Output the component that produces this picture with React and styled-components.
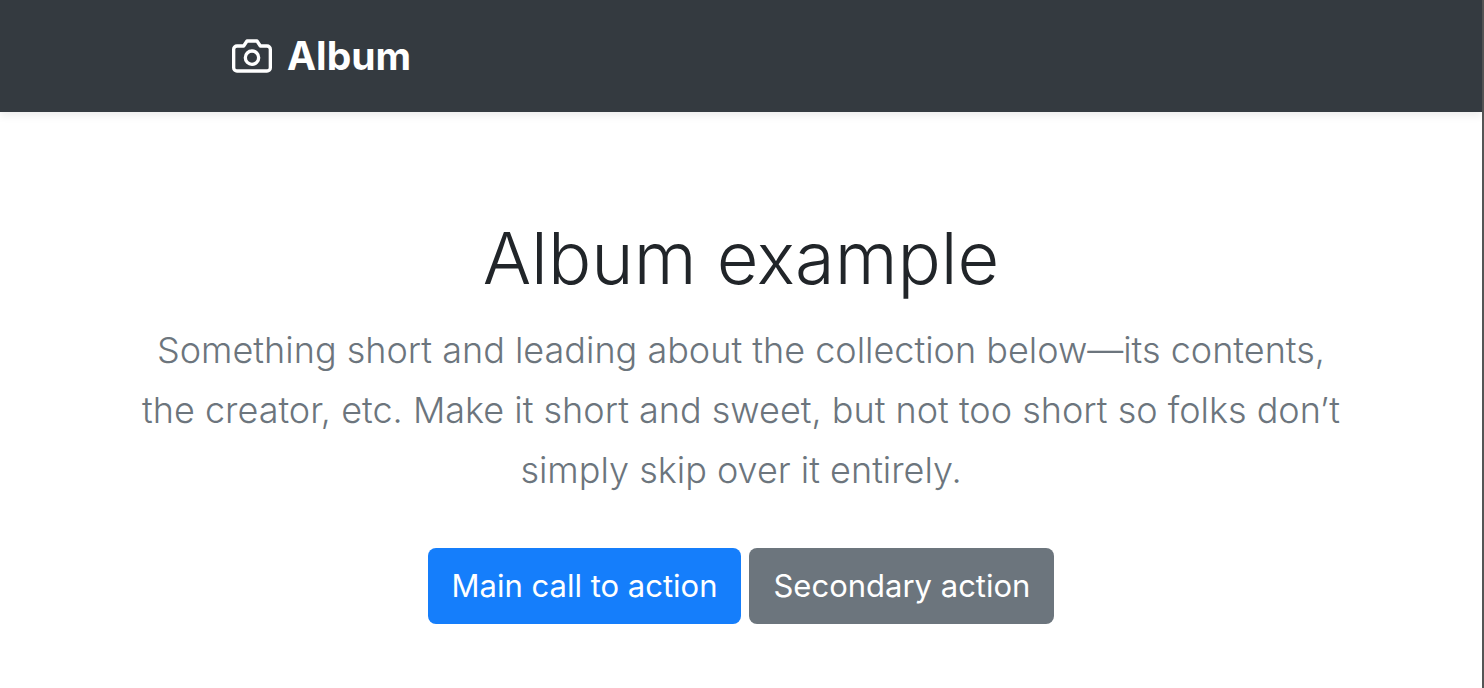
import React from "react";
import styled, { createGlobalStyle } from "styled-components";

const GlobalStyle = createGlobalStyle`
  *, *::before, *::after { box-sizing: border-box; }
  body {
    margin: 0;
    background: #fff;
    color: #212529;
    font-family: Inter, "Liberation Sans", sans-serif;
    font-size: 31px;
    line-height: 48px;
  }
`;

const Page = styled.div`
  min-height: 100vh;
  border-right: 2px solid #555;
`;

const Navbar = styled.header`
  background: #343a40;
  padding: 16px 0;
  box-shadow: 0 4px 8px rgba(0, 0, 0, 0.075);
`;

const NavContainer = styled.div`
  display: flex;
  max-width: 1080px;
  margin: 0 auto;
  padding: 0 31px;
`;

const Brand = styled.a`
  display: flex;
  align-items: center;
  gap: 15px;
  padding: 10px 0;
  color: #fff;
  font-size: 39px;
  font-weight: 700;
  line-height: 60px;
  text-decoration: none;
`;

const Hero = styled.main`
  max-width: 1280px;
  margin: 0 auto;
  padding: 98px 30px 48px;
  text-align: center;
`;

const Title = styled.h1`
  margin: 0 0 14px;
  font-size: 72px;
  font-weight: 300;
  line-height: 96px;
`;

const Lead = styled.p`
  margin: 0 0 48px;
  color: #6c757d;
  font-size: 36px;
  font-weight: 300;
  line-height: 60px;
`;

const Actions = styled.div`
  display: flex;
  flex-wrap: wrap;
  justify-content: center;
  gap: 8px;
`;

const Button = styled.button`
  padding: 14px 24px;
  border: 0;
  border-radius: 8px;
  background: ${({ $primary }) => ($primary ? "#157efb" : "#6c757d")};
  color: #fff;
  font: inherit;
  cursor: pointer;
`;

function CameraIcon() {
  return (
    <svg width="40" height="40" viewBox="0 0 24 24" fill="none" stroke="currentColor" strokeWidth="2" strokeLinecap="round" strokeLinejoin="round" aria-hidden="true">
      <path d="M23 19a2 2 0 0 1-2 2H3a2 2 0 0 1-2-2V8a2 2 0 0 1 2-2h4l2-3h6l2 3h4a2 2 0 0 1 2 2z" />
      <circle cx="12" cy="13" r="4" />
    </svg>
  );
}

export default function App() {
  return (
    <Page>
      <GlobalStyle />
      <Navbar>
        <NavContainer>
          <Brand href="#">
            <CameraIcon />
            Album
          </Brand>
        </NavContainer>
      </Navbar>
      <Hero>
        <Title>Album example</Title>
        <Lead>
          Something short and leading about the collection below—its contents,
          the creator, etc. Make it short and sweet, but not too short so folks
          don’t simply skip over it entirely.
        </Lead>
        <Actions>
          <Button type="button" $primary>Main call to action</Button>
          <Button type="button">Secondary action</Button>
        </Actions>
      </Hero>
    </Page>
  );
}
